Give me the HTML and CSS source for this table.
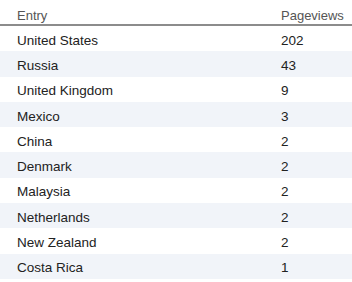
FILE: index.html
```html
<!DOCTYPE html>
<html>
<head>
<meta charset="utf-8">
<link rel="stylesheet" href="styles.css">
</head>
<body>
<div class="table">
  <div class="row head"><span class="c1">Entry</span><span class="c2">Pageviews</span></div>
  <div class="row"><span class="c1">United States</span><span class="c2">202</span></div>
  <div class="row alt"><span class="c1">Russia</span><span class="c2">43</span></div>
  <div class="row"><span class="c1">United Kingdom</span><span class="c2">9</span></div>
  <div class="row alt"><span class="c1">Mexico</span><span class="c2">3</span></div>
  <div class="row"><span class="c1">China</span><span class="c2">2</span></div>
  <div class="row alt"><span class="c1">Denmark</span><span class="c2">2</span></div>
  <div class="row"><span class="c1">Malaysia</span><span class="c2">2</span></div>
  <div class="row alt"><span class="c1">Netherlands</span><span class="c2">2</span></div>
  <div class="row"><span class="c1">New Zealand</span><span class="c2">2</span></div>
  <div class="row alt"><span class="c1">Costa Rica</span><span class="c2">1</span></div>
</div>
</body>
</html>
```
FILE: styles.css
```css
html, body {
  margin: 0;
  padding: 0;
  background: #ffffff;
}
.table {
  width: 352px;
  font-family: "Liberation Sans", Arial, sans-serif;
  font-size: 13.5px;
  color: #222222;
}
.row {
  display: grid;
  grid-template-columns: 264px 1fr;
  align-items: center;
  box-sizing: border-box;
  height: 25.3px;
  padding: 3px 0 0 17px;
}
.row.alt {
  background: #f1f4f9;
}
.row.head {
  height: 26px;
  padding-top: 7px;
  font-size: 13px;
  color: #555555;
  border-bottom: 2px solid #8c8c8c;
}
```
